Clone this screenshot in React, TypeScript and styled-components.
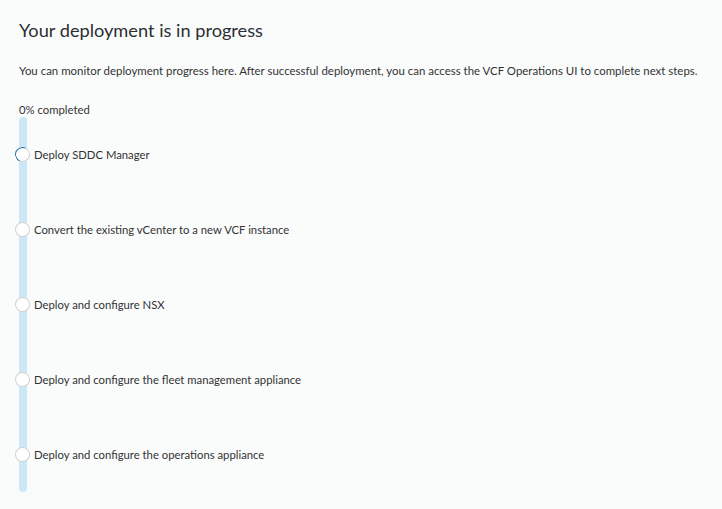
import styled, { createGlobalStyle } from "styled-components";

const GlobalStyle = createGlobalStyle`
  html, body {
    margin: 0;
    padding: 0;
    background: #fafcfc;
  }
  body {
    font-family: Lato, "Noto Sans", sans-serif;
    color: #333;
  }
`;

const Page = styled.div`
  width: 722px;
  height: 509px;
  box-sizing: border-box;
  padding: 18px 19px 0;
  background: #fafcfc;
`;

const Title = styled.h1`
  margin: 0;
  font-size: 18.2px;
  font-weight: 400;
  line-height: 24px;
  color: #2a2f33;
`;

const Text = styled.p`
  margin: 21px 0 0;
  font-size: 11.45px;
  line-height: 16px;
  color: #333;
`;

const Percent = styled.div`
  margin-top: 23px;
  font-size: 11.3px;
  line-height: 16px;
  color: #333;
`;

const Timeline = styled.ol`
  position: relative;
  list-style: none;
  margin: -1px 0 0;
  padding: 0;

  &::before {
    content: "";
    position: absolute;
    left: 0;
    top: 0;
    bottom: 0;
    width: 8px;
    border-radius: 4px;
    background: #cce7f6;
  }
`;

const Step = styled.li`
  position: relative;
  height: 75px;
  display: flex;
  align-items: center;
  gap: 4px;
  margin-left: -4px;
  font-size: 11.3px;
  color: #333;
`;

const Dot = styled.span<{ $active?: boolean }>`
  width: 15px;
  height: 15px;
  box-sizing: border-box;
  border-radius: 50%;
  background: #fff;
  border: 1.5px solid #d0d0d0;
  border-top-color: ${(p) => (p.$active ? "#1a6f9c" : "#d0d0d0")};
  border-left-color: ${(p) => (p.$active ? "#1a6f9c" : "#d0d0d0")};
  transform: rotate(-20deg);
  flex-shrink: 0;
`;

const steps = [
  "Deploy SDDC Manager",
  "Convert the existing vCenter to a new VCF instance",
  "Deploy and configure NSX",
  "Deploy and configure the fleet management appliance",
  "Deploy and configure the operations appliance",
];

export default function App() {
  return (
    <>
      <GlobalStyle />
      <Page>
        <Title>Your deployment is in progress</Title>
        <Text>
          You can monitor deployment progress here. After successful deployment, you can
          access the VCF Operations UI to complete next steps.
        </Text>
        <Percent>0% completed</Percent>
        <Timeline>
          {steps.map((s, i) => (
            <Step key={s}>
              <Dot $active={i === 0} />
              {s}
            </Step>
          ))}
        </Timeline>
      </Page>
    </>
  );
}
